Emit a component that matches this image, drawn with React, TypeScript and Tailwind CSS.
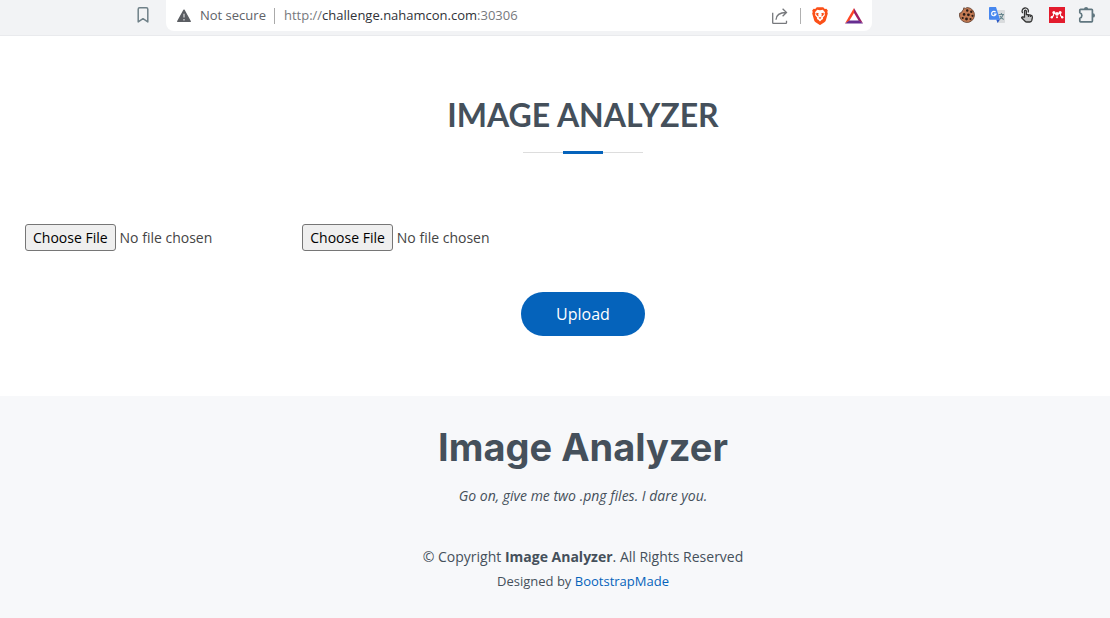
import React from "react";

function BookmarkIcon() {
  return (
    <svg width="14" height="18" viewBox="0 0 14 18" fill="none" stroke="#6f8088" strokeWidth="1.5" strokeLinejoin="round" aria-hidden="true">
      <path d="M2.2 3.2Q2.2 1.8 3.6 1.8H10.4Q11.8 1.8 11.8 3.2V15.9L7 12.7 2.2 15.9Z" />
    </svg>
  );
}

function WarningIcon() {
  return (
    <svg width="14" height="14" viewBox="0 0 14 14" aria-hidden="true">
      <path d="M7 1.2 13.2 12.4H.8Z" fill="#5b5e63" stroke="#5b5e63" strokeWidth="1.4" strokeLinejoin="round" />
      <path d="M7 4.8V8.6M7 10V11.5" stroke="#c9cacc" strokeWidth="1.4" />
    </svg>
  );
}

function ShareIcon() {
  return (
    <svg width="18" height="18" viewBox="0 0 18 18" fill="none" stroke="#77797d" strokeWidth="1.3" aria-hidden="true">
      <path d="M1.7 5.8V15.7Q1.7 16.4 2.4 16.4H14.8Q15.5 16.4 15.5 15.7V13.8" />
      <path d="M5 12.8C5.2 8 8 5.5 15.2 5.5M11.6 1.8 15.5 5.5 11.6 9.3" />
    </svg>
  );
}

function BraveIcon() {
  return (
    <svg width="16" height="18" viewBox="0 0 16 18" aria-hidden="true">
      <path d="M4.8.2H11.2L12.8 1.9 14.4 1.7 15.8 3.5 15.3 5 15.8 6.4 13.8 13.4Q13.4 14.5 12.4 15.2L8.6 17.7Q8 18.1 7.4 17.7L3.6 15.2Q2.6 14.5 2.2 13.4L.2 6.4.7 5 .2 3.5 1.6 1.7 3.2 1.9Z" fill="#fb5018" />
      <path d="M5.2 2.8 8 3.3 10.8 2.8 13 5.3 12.5 6.7 13 8 10.8 10.7 11.1 12 9.7 12.7 8 14.4 6.3 12.7 4.9 12 5.2 10.7 3 8 3.5 6.7 3 5.3Z" fill="#fff" />
      <path d="M4.4 5.7 6.8 6.2 6.2 7.5 6.7 9.6 5.4 9 4.1 7.4ZM11.6 5.7 9.2 6.2 9.8 7.5 9.3 9.6 10.6 9 11.9 7.4ZM6.5 10.8 8 10.1 9.5 10.8 8 12Z" fill="#fb5018" />
    </svg>
  );
}

function BatIcon() {
  return (
    <svg width="18" height="16" viewBox="0 0 18 16" aria-hidden="true">
      <path d="M9 0 0 15.6 4.2 13.1 9 5Z" fill="#ff4724" />
      <path d="M9 0 18 15.6 13.8 13.1 9 5Z" fill="#9e1f63" />
      <path d="M0 15.6H18L13.8 12.5H4.2Z" fill="#662d91" />
    </svg>
  );
}

function CookieIcon() {
  return (
    <svg width="16" height="16" viewBox="0 0 16 16" aria-hidden="true">
      <path d="M4.8.8Q6 2.2 8.2.5A7.5 7.5 0 1 1 .7 6.1Q3.2 6 3 4.2 4.7 3.5 4.8.8Z" fill="#c37a53" stroke="#5b3929" strokeWidth=".8" />
      <g fill="#2b1c16">
        <circle cx="8.2" cy="3.5" r="1.2" /><circle cx="12.3" cy="4.7" r="1.2" />
        <circle cx="5.1" cy="7.4" r="1.3" /><circle cx="9.4" cy="7.8" r="1.4" />
        <circle cx="13.5" cy="8.8" r="1.1" /><circle cx="3.7" cy="11" r="1.1" />
        <circle cx="7.5" cy="12" r="1.4" /><circle cx="11.5" cy="12.1" r="1.1" />
      </g>
    </svg>
  );
}

function TranslateIcon() {
  return (
    <svg width="16" height="16" viewBox="0 0 16 16" aria-hidden="true">
      <path d="M6 3H15.2Q16 3 16 3.8V15.2Q16 16 15.2 16H9Z" fill="#d9dbdd" />
      <path d="M9.5 7.5H15M12.4 6V7.5M14.2 7.5Q13.3 10.4 10.6 12.3M11 9Q12 11 14.7 12.5" stroke="#67868d" strokeWidth="1.1" fill="none" />
      <path d="M7.2 12.5H11L8.6 16Z" fill="#2856c5" />
      <path d="M.8 0H7L11 12.7H.8Q0 12.7 0 11.9V.8Q0 0 .8 0Z" fill="#4787ef" />
      <path d="M6.6 5.2A2.2 2.2 0 1 0 7 7.1H4.9" stroke="#fff" strokeWidth="1.2" fill="none" />
    </svg>
  );
}

function TouchIcon() {
  return (
    <svg width="14" height="16" viewBox="0 0 14 16" fill="none" stroke="#333" strokeWidth="1.3" strokeLinejoin="round" aria-hidden="true">
      <path d="M2.7 6.1A3.2 3.2 0 1 1 8.2 5.4" />
      <path d="M4.5 10.2V4.3Q4.5 3.2 5.4 3.2T6.4 4.3V7.5L10.7 8.2Q12.5 8.6 12.4 10.4L11.8 13.4Q11.4 15 9.9 15H6.8Q5.8 15 5.1 14.2L1.6 10.7 2.4 9.8Z" fill="#c5c6c7" />
      <path d="M8.5 8V10M10.5 8.4V10" />
    </svg>
  );
}

function MendeleyIcon() {
  return (
    <svg width="16" height="16" viewBox="0 0 16 16" aria-hidden="true">
      <path d="M0 0H16V16H0Z" fill="#e31b2d" />
      <g fill="#fff">
        <circle cx="4.9" cy="5.5" r="1.5" /><circle cx="11.1" cy="5.5" r="1.5" />
        <circle cx="8" cy="6.9" r="1.8" /><circle cx="2.8" cy="10.2" r="1.2" />
        <circle cx="8" cy="10.3" r="1" /><circle cx="13.2" cy="10.2" r="1.2" />
      </g>
      <path d="M3 10.2Q5 9 4.9 5.8M13 10.2Q11 9 11.1 5.8M5 6 8 7.4 11 6" fill="none" stroke="#fff" strokeWidth="1.1" />
    </svg>
  );
}

function PuzzleIcon() {
  return (
    <svg width="18" height="18" viewBox="0 0 18 18" aria-hidden="true">
      <path d="M2.6 3.3H13.6Q14.4 3.3 14.4 4.1V15.1Q14.4 15.9 13.6 15.9H2.6Q1.8 15.9 1.8 15.1V12.2A2.8 2.8 0 0 0 1.8 6.8V4.1Q1.8 3.3 2.6 3.3Z" fill="none" stroke="#60767f" strokeWidth="1.7" strokeLinejoin="round" />
      <path d="M6 3A2.1 2.1 0 0 1 10.2 3ZM14.8 7.2A2.2 2.2 0 0 1 14.8 11.6Z" fill="#60767f" />
    </svg>
  );
}

const extensions = [
  { label: "Cookies", icon: <CookieIcon /> },
  { label: "Translate", icon: <TranslateIcon /> },
  { label: "Touch", icon: <TouchIcon /> },
  { label: "Mendeley", icon: <MendeleyIcon /> },
  { label: "Extensions", icon: <PuzzleIcon /> },
];

function BrowserBar() {
  return (
    <header className="flex h-9 items-start border-b border-[#e9eaed] bg-[#f2f3f5] pl-[134px] pr-[14px] font-['Open_Sans',sans-serif]">
      <button aria-label="Bookmark" className="mr-[14px] flex h-[30px] w-[18px] items-center justify-center"><BookmarkIcon /></button>
      <div className="flex h-[31px] w-[706px] items-center rounded-b-lg bg-white pl-[11px] pr-[9px] text-[13px]">
        <WarningIcon />
        <span className="ml-[9px] text-[#606268]">Not secure</span>
        <span className="ml-2 h-4 w-px bg-[#aaa]" />
        <div className="ml-[9px] flex-1 text-[#77797d]">
          http://<span className="text-[#303238]">challenge.nahamcon.com</span>:30306
        </div>
        <button aria-label="Share"><ShareIcon /></button>
        <span className="ml-[11px] h-4 w-px bg-[#b0b0b0]" />
        <button aria-label="Brave Shields" className="ml-[11px]"><BraveIcon /></button>
        <button aria-label="Brave Rewards" className="ml-[17px]"><BatIcon /></button>
      </div>
      <div className="ml-auto flex h-[30px] items-center gap-3">
        {extensions.map((item) => (
          <button key={item.label} aria-label={item.label} className="flex w-[18px] items-center justify-center">{item.icon}</button>
        ))}
      </div>
    </header>
  );
}

function FileField({ label }: { label: string }) {
  return (
    <input
      type="file"
      aria-label={label}
      className="w-full text-sm text-[#444] file:mr-1 file:h-[27px] file:rounded-[3px] file:border file:border-solid file:border-[#767676] file:bg-[#efefef] file:px-[7px] file:text-black"
    />
  );
}

export default function App() {
  return (
    <div className="flex min-h-screen flex-col overflow-x-hidden bg-white font-['Open_Sans',sans-serif] text-[#444]">
      <BrowserBar />
      <main className="pb-[60px] pt-[60px]">
        <div className="flex flex-col items-center pl-14">
          <h1 className="font-['Lato',sans-serif] text-[32px] font-bold leading-[38px] text-[#45505b]">IMAGE ANALYZER</h1>
          <div className="mt-[17px] flex h-[3px] w-[120px] items-center justify-between">
            <span className="h-px w-10 bg-[#ddd]" />
            <span className="h-[3px] w-10 bg-[#0563bb]" />
            <span className="h-px w-10 bg-[#ddd]" />
          </div>
        </div>
        <form onSubmit={(event) => event.preventDefault()} className="mt-[70px]">
          <div className="-mr-6 grid grid-cols-4 pl-[25px]">
            <FileField label="First image" />
            <FileField label="Second image" />
          </div>
          <div className="mt-[41px] flex justify-center pl-14">
            <button type="submit" className="h-11 rounded-full bg-[#0563bb] px-[35px] text-base text-white">Upload</button>
          </div>
        </form>
      </main>
      <footer className="flex flex-1 flex-col items-center bg-[#f7f8fa] pb-6 pl-14 pt-[30px] text-center text-sm text-[#45505b]">
        <h2 className="font-['Inter',sans-serif] text-[38px] font-bold leading-[43px]">Image Analyzer</h2>
        <p className="mt-4 italic leading-[21px]">Go on, give me two .png files. I dare you.</p>
        <p className="mt-10 leading-[21px]">© Copyright <strong>Image Analyzer</strong>. All Rights Reserved</p>
        <p className="mt-1 text-[13px] leading-5">Designed by <a href="https://bootstrapmade.com/" className="text-[#0563bb]">BootstrapMade</a></p>
      </footer>
    </div>
  );
}
